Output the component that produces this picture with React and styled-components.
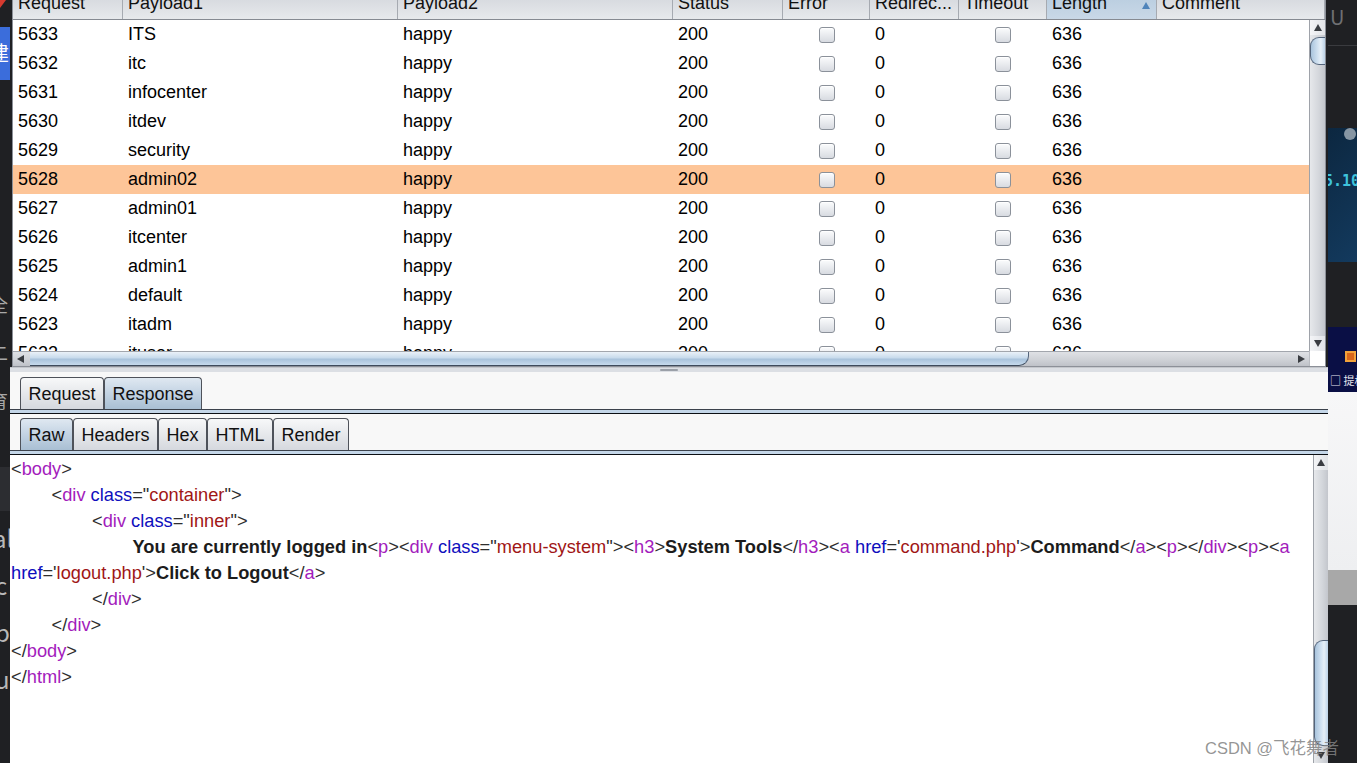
import React from "react"
import styled, { createGlobalStyle } from "styled-components"

const GlobalStyle = createGlobalStyle`
  *, *::before, *::after { box-sizing: border-box; }
  html, body {
    margin: 0;
    padding: 0;
    background: #1f2023;
  }
  body {
    font-family: "Liberation Sans", Arial, sans-serif;
  }
`

const Screen = styled.div`
  position: relative;
  display: flex;
  width: 1357px;
  height: 763px;
  overflow: hidden;
  background: #1f2023;
`

/* ---------- desktop strips either side of the window ---------- */

const SideStrip = styled.div`
  flex: 0 0 ${p => p.$width}px;
  display: flex;
  flex-direction: column;
  overflow: hidden;
`

const SideBlock = styled.div`
  flex: ${p => (p.$h ? `0 0 ${p.$h}px` : "1 1 auto")};
  background: ${p => p.$bg || "#1f2023"};
  padding-top: ${p => p.$pad || 0}px;
  overflow: hidden;
  display: flex;
  flex-direction: column;
`

const Glyph = styled.div`
  font-family: "Noto Sans CJK SC", "Liberation Sans", sans-serif;
  font-size: ${p => p.$size || 18}px;
  line-height: ${p => p.$lh || 24}px;
  color: ${p => p.$color || "#a8a8a8"};
  margin-left: ${p => p.$x || 0}px;
  margin-top: ${p => p.$y || 0}px;
  white-space: nowrap;
`

const RedMark = styled.div`
  width: 0;
  height: 0;
  border-left: 6px solid #d63a2f;
  border-bottom: 8px solid transparent;
`

const HostText = styled.div`
  font-family: "DejaVu Sans Mono", monospace;
  font-weight: bold;
  font-size: 15px;
  line-height: 20px;
  color: #3ec3dc;
  margin-left: -4px;
  white-space: nowrap;
`

const GreyDot = styled.div`
  width: 12px;
  height: 12px;
  border-radius: 50%;
  background: #8796a3;
  margin: 0 0 0 16px;
`

const OrangeIcon = styled.div`
  width: 11px;
  height: 11px;
  margin-left: 17px;
  background: #d9661b;
  border: 2px solid #f2a23a;
`

/* ---------- burp window ---------- */

const Window = styled.div`
  flex: 0 0 1318px;
  display: flex;
  flex-direction: column;
`

const TopPane = styled.div`
  flex: 0 0 367px;
  padding: 0 2px;
`

const TablePanel = styled.div`
  height: 367px;
  border: 1px solid #8c9098;
  border-top: none;
  display: flex;
  flex-direction: column;
  background: #fff;
`

const HeaderRow = styled.div`
  flex: 0 0 20px;
  display: flex;
  border-bottom: 1px solid #868a92;
  background: linear-gradient(#d8dbe0, #e7e9ec);
  overflow: hidden;
`

const HeadCell = styled.div`
  flex: ${p => (p.$width ? `0 0 ${p.$width}px` : "1 1 auto")};
  display: flex;
  justify-content: space-between;
  align-items: flex-start;
  padding-left: 5px;
  border-right: 1px solid #a6aab1;
  background: ${p => (p.$sorted ? "linear-gradient(#bccfe1, #c9d8e7)" : "transparent")};
  font-size: 18px;
  line-height: 20px;
  color: #111;
  white-space: nowrap;
  overflow: hidden;
`

const HeadLabel = styled.span`
  display: block;
  margin-top: -7px;
`

const SortArrow = styled.svg`
  flex: 0 0 auto;
  margin: 2px 6px 0 0;
`

const TableBody = styled.div`
  flex: 0 0 331px;
  display: flex;
  overflow: hidden;
`

const Rows = styled.div`
  flex: 1 1 auto;
  overflow: hidden;
`

const Row = styled.div`
  display: flex;
  height: 29px;
  background: ${p => (p.$selected ? "#fdc598" : "#fff")};
`

const Cell = styled.div`
  flex: 0 0 ${p => p.$width}px;
  display: flex;
  align-items: center;
  justify-content: ${p => (p.$center ? "center" : "flex-start")};
  padding-left: ${p => (p.$center ? 0 : 5)}px;
  font-size: 18px;
  color: #000;
  white-space: nowrap;
`

const Checkbox = styled.div`
  width: 16px;
  height: 16px;
  border: 1px solid #8b919a;
  border-radius: 3px;
  background: linear-gradient(#fbfcfd, #d8dbe1);
  box-shadow: inset 0 1px 0 #fff;
`

const VScroll = styled.div`
  flex: 0 0 ${p => p.$width}px;
  display: flex;
  flex-direction: column;
  border-left: 1px solid #9ea2a9;
  background: linear-gradient(90deg, #e6e8eb, #d3d6db 60%, #c3c6cc);
  overflow: hidden;
`

const ArrowBtn = styled.div`
  flex: 0 0 15px;
  display: flex;
  align-items: center;
  justify-content: center;
  margin-top: ${p => p.$gap || 0}px;
  background: ${p => (p.$plain ? "transparent" : "linear-gradient(90deg, #f4f5f7, #e1e3e7)")};
`

const VThumb = styled.div`
  flex: 0 0 ${p => p.$size}px;
  margin-top: ${p => p.$gap || 0}px;
  border: 1px solid #54657c;
  border-right: none;
  border-radius: 9px 0 0 9px;
  background: linear-gradient(90deg, #a9c4dd, #cfe0f0 45%, #e6eff7 70%, #bcd2e7);
`

const Spacer = styled.div`
  flex: 1 1 auto;
`

const HScrollRow = styled.div`
  flex: 0 0 15px;
  display: flex;
`

const HScroll = styled.div`
  flex: 1 1 auto;
  display: flex;
  border-top: 1px solid #a2a6ad;
  background: linear-gradient(#dfe1e5, #cdd0d5 60%, #bfc2c8);
`

const HThumb = styled.div`
  flex: 0 0 ${p => p.$size}px;
  margin-left: 2px;
  border-right: 1px solid #54657c;
  border-bottom: 1px solid #3e4b5c;
  border-radius: 0 0 10px 0;
  background: linear-gradient(#eaf1f8, #c8dbec 45%, #a9c3dc 55%, #c6daec);
`

const HArrow = styled.div`
  flex: 0 0 15px;
  display: flex;
  align-items: center;
  justify-content: center;
`

const Corner = styled.div`
  flex: 0 0 16px;
  background: #fff;
  border-left: 1px solid #b9bcc2;
`

const Splitter = styled.div`
  flex: 0 0 5px;
  background: #dcdfe4;
  border-top: 1px solid #c4c7cc;
  display: flex;
`

const SplitHandle = styled.div`
  width: 18px;
  height: 2px;
  margin: 1px 0 0 650px;
  border-radius: 1px;
  background: #9ba0a8;
`

const LowerPane = styled.div`
  flex: 1 1 auto;
  display: flex;
  flex-direction: column;
  background: #f8f8f8;
  min-height: 0;
`

const TabBar = styled.div`
  display: flex;
  padding: ${p => p.$top}px 0 0 10px;
`

const Tab = styled.div`
  height: 32px;
  display: flex;
  align-items: center;
  padding: 1px 7.5px 0;
  border: 1px solid #4e525a;
  border-bottom: none;
  border-radius: 4px 4px 0 0;
  background: ${p =>
    p.$active
      ? "linear-gradient(#dfe8f1, #c3d3e3 50%, #a9bfd3)"
      : "linear-gradient(#f7f8f9, #e6e8eb 50%, #d5d8de)"};
  font-size: 18px;
  color: #111;
  white-space: nowrap;
`

const TabRule = styled.div`
  flex: 0 0 5px;
  border-top: 1px solid #3c424c;
  border-bottom: 1px solid #0c0f14;
  background: #c4d6e8;
`

const CodeArea = styled.div`
  flex: 1 1 auto;
  display: flex;
  min-height: 0;
`

const CodeText = styled.div`
  flex: 1 1 auto;
  background: #fff;
  padding-top: 1px;
  font-size: 18.25px;
  line-height: 26px;
  overflow: hidden;
  white-space: pre;
`

const CodeLine = styled.div`
  height: 26px;
  padding-left: ${p => 1 + p.$indent * 40.5}px;
`

const tokenColors = {
  p: "#2e2e2e",
  t: "#a31cbc",
  a: "#0e0ebd",
  v: "#a01616",
  b: "#1c1c1c",
  s: "#2e2e2e",
}

const Token = styled.span`
  color: ${p => tokenColors[p.$kind]};
  font-weight: ${p => (p.$kind === "b" ? "bold" : "normal")};
`

const Watermark = styled.div`
  position: absolute;
  left: 1205px;
  top: 735px;
  font-family: "Liberation Sans", "Noto Sans CJK SC", sans-serif;
  font-size: 16.5px;
  color: rgba(130, 130, 130, 0.85);
  white-space: nowrap;
`

/* ---------- data ---------- */

const columns = [
  { label: "Request", width: 110 },
  { label: "Payload1", width: 275 },
  { label: "Payload2", width: 275 },
  { label: "Status", width: 110 },
  { label: "Error", width: 87 },
  { label: "Redirec...", width: 89 },
  { label: "Timeout", width: 88 },
  { label: "Length", width: 110, sorted: true },
  { label: "Comment" },
]

const results = [
  ["5633", "ITS"],
  ["5632", "itc"],
  ["5631", "infocenter"],
  ["5630", "itdev"],
  ["5629", "security"],
  ["5628", "admin02"],
  ["5627", "admin01"],
  ["5626", "itcenter"],
  ["5625", "admin1"],
  ["5624", "default"],
  ["5623", "itadm"],
  ["5622", "ituser"],
]

const codeLines = [
  { indent: 0, tokens: [["p", "<"], ["t", "body"], ["p", ">"]] },
  { indent: 1, tokens: [["p", "<"], ["t", "div"], ["s", " "], ["a", "class"], ["p", "=\""], ["v", "container"], ["p", "\">"]] },
  { indent: 2, tokens: [["p", "<"], ["t", "div"], ["s", " "], ["a", "class"], ["p", "=\""], ["v", "inner"], ["p", "\">"]] },
  {
    indent: 3,
    tokens: [
      ["b", "You are currently logged in"], ["p", "<"], ["t", "p"], ["p", "><"], ["t", "div"], ["s", " "],
      ["a", "class"], ["p", "=\""], ["v", "menu-system"], ["p", "\"><"], ["t", "h3"], ["p", ">"],
      ["b", "System Tools"], ["p", "</"], ["t", "h3"], ["p", "><"], ["t", "a"], ["s", " "], ["a", "href"],
      ["p", "='"], ["v", "command.php"], ["p", "'>"], ["b", "Command"], ["p", "</"], ["t", "a"], ["p", "><"],
      ["t", "p"], ["p", "></"], ["t", "div"], ["p", "><"], ["t", "p"], ["p", "><"], ["t", "a"],
    ],
  },
  {
    indent: 0,
    tokens: [["a", "href"], ["p", "='"], ["v", "logout.php"], ["p", "'>"], ["b", "Click to Logout"], ["p", "</"], ["t", "a"], ["p", ">"]],
  },
  { indent: 2, tokens: [["p", "</"], ["t", "div"], ["p", ">"]] },
  { indent: 1, tokens: [["p", "</"], ["t", "div"], ["p", ">"]] },
  { indent: 0, tokens: [["p", "</"], ["t", "body"], ["p", ">"]] },
  { indent: 0, tokens: [["p", "</"], ["t", "html"], ["p", ">"]] },
]

function Arrow({ dir }) {
  const points = {
    up: "0,7 4,0 8,7",
    down: "0,0 8,0 4,7",
    left: "7,0 7,8 0,4",
    right: "0,0 0,8 7,4",
  }
  return (
    <svg width="8" height="8" viewBox="0 0 8 8">
      <polygon points={points[dir]} fill="#3a3d42" />
    </svg>
  )
}

function ResultsTable() {
  return (
    <TablePanel>
      <HeaderRow>
        {columns.map(col => (
          <HeadCell key={col.label} $width={col.width} $sorted={col.sorted}>
            <HeadLabel>{col.label}</HeadLabel>
            {col.sorted && (
              <SortArrow width="8" height="7" viewBox="0 0 8 7">
                <polygon points="0,7 4,0 8,7" fill="#4f84ba" />
              </SortArrow>
            )}
          </HeadCell>
        ))}
      </HeaderRow>
      <TableBody>
        <Rows>
          {results.map(([id, payload]) => (
            <Row key={id} $selected={id === "5628"}>
              <Cell $width={110}>{id}</Cell>
              <Cell $width={275}>{payload}</Cell>
              <Cell $width={275}>happy</Cell>
              <Cell $width={110}>200</Cell>
              <Cell $width={87} $center>
                <Checkbox />
              </Cell>
              <Cell $width={89}>0</Cell>
              <Cell $width={88} $center>
                <Checkbox />
              </Cell>
              <Cell $width={110}>636</Cell>
            </Row>
          ))}
        </Rows>
        <VScroll $width={16}>
          <ArrowBtn>
            <Arrow dir="up" />
          </ArrowBtn>
          <VThumb $size={28} $gap={2} />
          <Spacer />
          <ArrowBtn>
            <Arrow dir="down" />
          </ArrowBtn>
        </VScroll>
      </TableBody>
      <HScrollRow>
        <HScroll>
          <HArrow>
            <Arrow dir="left" />
          </HArrow>
          <HThumb $size={999} />
          <Spacer />
          <HArrow>
            <Arrow dir="right" />
          </HArrow>
        </HScroll>
        <Corner />
      </HScrollRow>
    </TablePanel>
  )
}

function MessageViewer() {
  return (
    <LowerPane>
      <TabBar $top={5}>
        <Tab>Request</Tab>
        <Tab $active>Response</Tab>
      </TabBar>
      <TabRule />
      <TabBar $top={4}>
        <Tab $active>Raw</Tab>
        <Tab>Headers</Tab>
        <Tab>Hex</Tab>
        <Tab>HTML</Tab>
        <Tab>Render</Tab>
      </TabBar>
      <TabRule />
      <CodeArea>
        <CodeText>
          {codeLines.map((line, i) => (
            <CodeLine key={i} $indent={line.indent}>
              {line.tokens.map(([kind, text], j) => (
                <Token key={j} $kind={kind}>
                  {text}
                </Token>
              ))}
            </CodeLine>
          ))}
        </CodeText>
        <VScroll $width={15}>
          <ArrowBtn>
            <Arrow dir="up" />
          </ArrowBtn>
          <Spacer />
          <VThumb $size={106} />
          <ArrowBtn $plain $gap={2}>
            <Arrow dir="down" />
          </ArrowBtn>
        </VScroll>
      </CodeArea>
    </LowerPane>
  )
}

export default function App() {
  return (
    <Screen>
      <GlobalStyle />
      <SideStrip $width={10}>
        <SideBlock $h={27}>
          <RedMark />
        </SideBlock>
        <SideBlock $h={53} $bg="#3b6ddb" $pad={14}>
          <Glyph $color="#fff" $size={20} $x={-11}>建</Glyph>
        </SideBlock>
        <SideBlock $h={387} $pad={200}>
          <Glyph $x={-10} $lh={48}>全</Glyph>
          <Glyph $x={-10} $lh={48}>二</Glyph>
          <Glyph $x={-10} $lh={48}>育</Glyph>
        </SideBlock>
        <SideBlock $h={44} $bg="#2c2d31" />
        <SideBlock $pad={3}>
          <Glyph $x={-7} $size={24} $lh={47} $color="#b9b9b9">al</Glyph>
          <Glyph $x={-5} $size={24} $lh={47} $color="#b9b9b9">c</Glyph>
          <Glyph $x={-5} $size={24} $lh={47} $color="#b9b9b9">b</Glyph>
          <Glyph $x={-5} $size={24} $lh={47} $color="#b9b9b9">u</Glyph>
        </SideBlock>
      </SideStrip>

      <Window>
        <TopPane>
          <ResultsTable />
        </TopPane>
        <Splitter>
          <SplitHandle />
        </Splitter>
        <MessageViewer />
      </Window>

      <SideStrip $width={29}>
        <SideBlock $h={45} $pad={4}>
          <Glyph $x={2} $size={20} $lh={26} $color="#6f7073">U</Glyph>
        </SideBlock>
        <SideBlock $h={1} $bg="#3a3b3f" />
        <SideBlock $h={82} />
        <SideBlock $h={134} $bg="linear-gradient(135deg, #0c2740, #133a5e)">
          <GreyDot />
          <SideBlock $h={31} $bg="transparent" />
          <HostText>5.10</HostText>
        </SideBlock>
        <SideBlock $h={65} />
        <SideBlock $h={65} $bg="#0a0f45" $pad={24}>
          <OrangeIcon />
          <Glyph $x={2} $y={10} $size={11} $lh={16} $color="#e8e8f0">□ 提权</Glyph>
        </SideBlock>
        <SideBlock $h={178} $bg="linear-gradient(#f7f7f8, #eeeff1)" />
        <SideBlock $h={35} $bg="#a8a8a8" />
        <SideBlock />
      </SideStrip>

      <Watermark>CSDN @飞花舞者</Watermark>
    </Screen>
  )
}
